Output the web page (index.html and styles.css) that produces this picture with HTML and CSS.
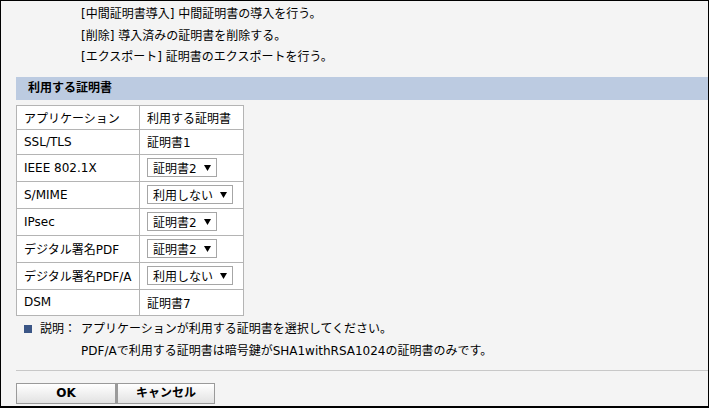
FILE: index.html
```html
<!DOCTYPE html>
<html lang="ja">
<head>
<meta charset="utf-8">
<link rel="stylesheet" href="styles.css">
</head>
<body>
<div class="frame">
  <div class="intro">
    <div class="line">[中間証明書導入] 中間証明書の導入を行う。</div>
    <div class="line">[削除] 導入済みの証明書を削除する。</div>
    <div class="line">[エクスポート] 証明書のエクスポートを行う。</div>
  </div>
  <div class="section-bar">利用する証明書</div>
  <table class="cert-table">
    <tr class="r-head"><td class="c1">アプリケーション</td><td class="c2">利用する証明書</td></tr>
    <tr class="r-text"><td class="c1">SSL/TLS</td><td class="c2">証明書1</td></tr>
    <tr class="r-sel"><td class="c1">IEEE 802.1X</td><td class="c2"><span class="sel">証明書2<svg class="arr" width="7" height="6" viewBox="0 0 7 6"><path d="M0 0H7L3.5 6Z"/></svg></span></td></tr>
    <tr class="r-sel"><td class="c1">S/MIME</td><td class="c2"><span class="sel">利用しない<svg class="arr" width="7" height="6" viewBox="0 0 7 6"><path d="M0 0H7L3.5 6Z"/></svg></span></td></tr>
    <tr class="r-sel"><td class="c1">IPsec</td><td class="c2"><span class="sel">証明書2<svg class="arr" width="7" height="6" viewBox="0 0 7 6"><path d="M0 0H7L3.5 6Z"/></svg></span></td></tr>
    <tr class="r-sel"><td class="c1">デジタル署名PDF</td><td class="c2"><span class="sel">証明書2<svg class="arr" width="7" height="6" viewBox="0 0 7 6"><path d="M0 0H7L3.5 6Z"/></svg></span></td></tr>
    <tr class="r-sel"><td class="c1">デジタル署名PDF/A</td><td class="c2"><span class="sel">利用しない<svg class="arr" width="7" height="6" viewBox="0 0 7 6"><path d="M0 0H7L3.5 6Z"/></svg></span></td></tr>
    <tr class="r-last"><td class="c1">DSM</td><td class="c2">証明書7</td></tr>
  </table>
  <div class="note">
    <div class="note-label"><span class="bullet"></span>説明：</div>
    <div class="note-text">
      <div class="nline">アプリケーションが利用する証明書を選択してください。</div>
      <div class="nline">PDF/Aで利用する証明書は暗号鍵がSHA1withRSA1024の証明書のみです。</div>
    </div>
  </div>
  <div class="sep"></div>
  <div class="buttons">
    <button class="btn">OK</button><button class="btn">キャンセル</button>
  </div>
</div>
</body>
</html>
```
FILE: styles.css
```css
html, body {
  margin: 0;
  padding: 0;
  background: #fff;
}
body {
  font-family: "DejaVu Sans", "Noto Sans CJK JP", sans-serif;
  font-size: 12px;
  color: #000;
}
.frame {
  width: 709px;
  height: 408px;
  box-sizing: border-box;
  border: 1px solid #000;
  border-bottom-width: 2px;
  background: #f4f4f4;
  overflow: hidden;
}
.intro {
  padding: 3px 0 0 80px;
}
.line {
  height: 21.5px;
  line-height: 21.5px;
}
.section-bar {
  margin: 8px 0 0 15px;
  height: 23px;
  line-height: 23px;
  background: #bccbe1;
  font-weight: bold;
  padding-left: 12px;
}
.cert-table {
  margin: 5px 0 0 15px;
  border-collapse: collapse;
  background: #fff;
}
.cert-table td {
  border: 1px solid #b4b4b4;
  padding: 0;
  vertical-align: middle;
  white-space: nowrap;
}
.c1 {
  width: 115px;
  padding-left: 7px !important;
}
.c2 {
  width: 96px;
  padding-left: 7px !important;
}
.r-head td { height: 23px; }
.r-text td { height: 24px; }
.r-sel td { height: 26px; }
.r-last td { height: 25px; }
.sel {
  display: inline-flex;
  align-items: center;
  height: 17px;
  border: 1px solid #a6a6a6;
  background: #fff;
  padding: 0 5px 0 5px;
  gap: 7px;
  vertical-align: middle;
}
.arr {
  fill: #000;
  display: block;
}
.note {
  display: flex;
  margin: 2px 0 0 23px;
}
.note-label {
  display: flex;
  align-items: center;
  width: 57px;
  height: 22px;
  line-height: 22px;
}
.nline {
  height: 22px;
  line-height: 22px;
}
.bullet {
  width: 8px;
  height: 8px;
  background: #3b5686;
  margin-right: 8px;
}
.sep {
  margin: 8px 0 0 15px;
  border-top: 1px solid #c8c8c8;
}
.buttons {
  display: flex;
  margin: 12px 0 0 15px;
}
.btn {
  width: 100px;
  height: 21px;
  margin: 0;
  padding: 0;
  border: 1px solid #9a9a9a;
  background: linear-gradient(#ffffff, #e2e2e2);
  font-family: "DejaVu Sans", "Noto Sans CJK JP", sans-serif;
  font-size: 12px;
  font-weight: bold;
  line-height: 19px;
  color: #000;
}
.btn + .btn {
  border-left: 2px solid #9a9a9a;
  width: 99px;
}
```
